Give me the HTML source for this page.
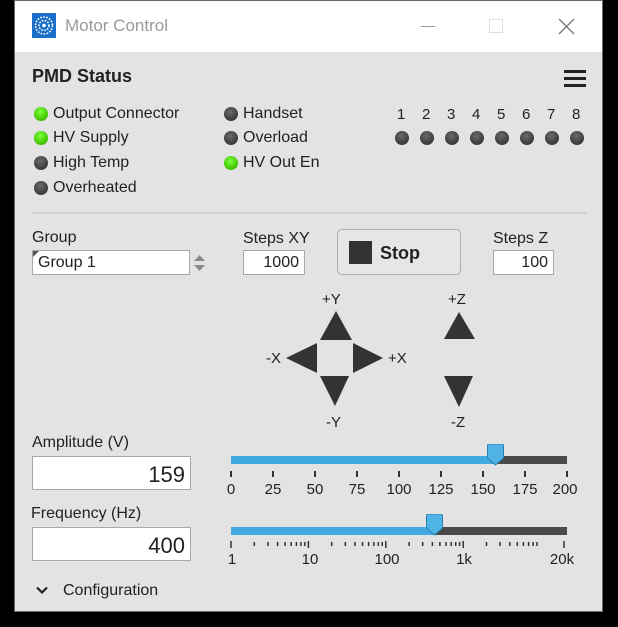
<!DOCTYPE html>
<html><head><meta charset="utf-8"><style>
*{margin:0;padding:0;box-sizing:border-box}
body{width:618px;height:627px;background:#000;position:relative;overflow:hidden;font-family:"Liberation Sans","DejaVu Sans",sans-serif;color:#222}
#win{position:absolute;left:14px;top:0;width:589px;height:612px;background:#e3e3e3;border:1px solid #6b6b6b}
#tb{position:absolute;left:0;top:0;width:100%;height:51px;background:#fff}
.a{position:absolute;white-space:nowrap}
.t{font-size:16px;line-height:18px}
.led{position:absolute;width:14px;height:14px;border-radius:50%;background:radial-gradient(circle at 45% 35%,#6a6a6a,#3a3a3a 70%)}
.g{background:radial-gradient(circle at 45% 35%,#7dff3a,#3cc000 70%)}
.inp{position:absolute;background:#fff;border:1px solid #a8a8a8;text-align:right;padding-right:5px}
.tick{position:absolute;width:2px;background:#333}
.tl{position:absolute;font-size:15px;transform:translateX(-50%)}
</style></head><body>
<div id="win">
<div id="tb">
 <svg class="a" style="left:17px;top:12px" width="24" height="25" viewBox="0 0 24 25"><rect width="24" height="25" fill="#1b6fc8"/><g fill="none" stroke="#fff" stroke-width="1.6" stroke-dasharray="1.6 1.4"><circle cx="12" cy="12.5" r="8.5"/><circle cx="12" cy="12.5" r="5"/></g><circle cx="12" cy="12.5" r="1.8" fill="#fff"/></svg>
 <div class="a" style="left:50px;top:15px;font-size:17px;color:#9a9a9a">Motor Control</div>
 <div class="a" style="left:406px;top:25px;width:14px;height:1px;background:#999"></div>
 <div class="a" style="left:474px;top:18px;width:14px;height:14px;border:1px solid #ddd"></div>
 <svg class="a" style="left:543px;top:17px" width="17" height="17"><path d="M1 1L16 16M16 1L1 16" stroke="#777" stroke-width="1.3"/></svg>
</div>
<div class="a" style="left:17px;top:65px;font-size:18px;font-weight:bold;color:#222">PMD Status</div>
<div class="a" style="left:549px;top:69px;width:22px;height:3px;background:#222;box-shadow:0 7px 0 #222,0 14px 0 #222"></div>

<div class="led g" style="left:19px;top:106px"></div><div class="a t" style="left:38px;top:104px">Output Connector</div>
<div class="led g" style="left:19px;top:130px"></div><div class="a t" style="left:38px;top:128px">HV Supply</div>
<div class="led" style="left:19px;top:155px"></div><div class="a t" style="left:38px;top:153px">High Temp</div>
<div class="led" style="left:19px;top:180px"></div><div class="a t" style="left:38px;top:178px">Overheated</div>
<div class="led" style="left:209px;top:106px"></div><div class="a t" style="left:228px;top:104px">Handset</div>
<div class="led" style="left:209px;top:130px"></div><div class="a t" style="left:228px;top:128px">Overload</div>
<div class="led g" style="left:209px;top:155px"></div><div class="a t" style="left:228px;top:153px">HV Out En</div>

<div class="a t" style="left:382px;top:105px;width:200px;font-size:15px">
<span class="a" style="left:0">1</span><span class="a" style="left:25px">2</span><span class="a" style="left:50px">3</span><span class="a" style="left:75px">4</span><span class="a" style="left:100px">5</span><span class="a" style="left:125px">6</span><span class="a" style="left:150px">7</span><span class="a" style="left:175px">8</span></div>
<div class="led" style="left:380px;top:130px"></div><div class="led" style="left:405px;top:130px"></div><div class="led" style="left:430px;top:130px"></div><div class="led" style="left:455px;top:130px"></div><div class="led" style="left:480px;top:130px"></div><div class="led" style="left:505px;top:130px"></div><div class="led" style="left:530px;top:130px"></div><div class="led" style="left:555px;top:130px"></div>

<div class="a" style="left:17px;top:211px;width:555px;height:2px;background:#cfcfcf"></div>

<div class="a t" style="left:17px;top:228px">Group</div>
<div class="inp" style="left:17px;top:249px;width:158px;height:25px;text-align:left;padding:3px 5px;font-size:16px">Group 1</div>
<div class="a" style="left:18px;top:250px;width:0;height:0;border-top:6px solid #555;border-right:6px solid transparent"></div>
<svg class="a" style="left:178px;top:252px" width="13" height="20"><path d="M1 8L6.5 2L12 8Z M1 12L6.5 18L12 12Z" fill="#8a8a8a"/></svg>

<div class="a t" style="left:228px;top:229px">Steps XY</div>
<div class="inp t" style="left:228px;top:249px;width:62px;height:25px;padding-top:3px">1000</div>
<div class="a" style="left:322px;top:228px;width:124px;height:46px;border:1px solid #adadad;border-radius:5px;background:#e6e6e6"></div>
<div class="a" style="left:334px;top:240px;width:23px;height:23px;background:#333"></div>
<div class="a" style="left:365px;top:242px;font-size:18px;font-weight:bold">Stop</div>
<div class="a t" style="left:478px;top:229px">Steps Z</div>
<div class="inp t" style="left:478px;top:249px;width:61px;height:25px;padding-top:3px">100</div>

<svg class="a" style="left:0;top:0" width="589" height="612">
<g fill="#333">
<path d="M321 310L337 339L305 339Z"/>
<path d="M271 357L302 342L302 372Z"/>
<path d="M368 357L338 342L338 372Z"/>
<path d="M305 375L334 375L320 405Z"/>
<path d="M444 311L460 338L429 338Z"/>
<path d="M429 375L458 375L444 406Z"/>
</g>
<g font-size="15" fill="#222" font-family="Liberation Sans,sans-serif">
<text x="307" y="303">+Y</text><text x="251" y="362">-X</text><text x="373" y="362">+X</text><text x="311" y="426">-Y</text>
<text x="433" y="303">+Z</text><text x="436" y="426">-Z</text>
</g>
</svg>

<div class="a t" style="left:17px;top:433px">Amplitude (V)</div>
<div class="inp" style="left:17px;top:455px;width:159px;height:34px;font-size:22px;padding-top:5px">159</div>
<div class="a" style="left:216px;top:455px;width:336px;height:8px;background:#4a4a4a"></div>
<div class="a" style="left:216px;top:455px;width:264px;height:8px;background:#3fa9e0"></div>
<svg class="a" style="left:472px;top:443px" width="17" height="22"><path d="M2 0H15Q16.5 0 16.5 2V14L8.5 21L0.5 14V2Q0.5 0 2 0Z" fill="#4fb3e6" stroke="#2a7fb0"/></svg>
<div id="amp"></div>

<div class="a t" style="left:16px;top:504px">Frequency (Hz)</div>
<div class="inp" style="left:17px;top:526px;width:159px;height:34px;font-size:22px;padding-top:5px">400</div>
<div class="a" style="left:216px;top:526px;width:336px;height:8px;background:#4a4a4a"></div>
<div class="a" style="left:216px;top:526px;width:203px;height:8px;background:#3fa9e0"></div>
<svg class="a" style="left:411px;top:513px" width="17" height="22"><path d="M2 0H15Q16.5 0 16.5 2V14L8.5 21L0.5 14V2Q0.5 0 2 0Z" fill="#4fb3e6" stroke="#2a7fb0"/></svg>

<div style="position:absolute;left:0;top:0">
<div class="tick" style="left:215px;top:470px;height:6px"></div><div class="tick" style="left:257px;top:470px;height:6px"></div><div class="tick" style="left:299px;top:470px;height:6px"></div><div class="tick" style="left:341px;top:470px;height:6px"></div><div class="tick" style="left:383px;top:470px;height:6px"></div><div class="tick" style="left:425px;top:470px;height:6px"></div><div class="tick" style="left:467px;top:470px;height:6px"></div><div class="tick" style="left:509px;top:470px;height:6px"></div><div class="tick" style="left:551px;top:470px;height:6px"></div>
<div class="tl" style="left:216px;top:480px">0</div><div class="tl" style="left:258px;top:480px">25</div><div class="tl" style="left:300px;top:480px">50</div><div class="tl" style="left:342px;top:480px">75</div><div class="tl" style="left:384px;top:480px">100</div><div class="tl" style="left:426px;top:480px">125</div><div class="tl" style="left:468px;top:480px">150</div><div class="tl" style="left:510px;top:480px">175</div><div class="tl" style="left:550px;top:480px">200</div>
</div>
<svg class="a" style="left:0;top:0" width="589" height="612"><g stroke="#333" stroke-width="1.5">
<path d="M216 540V547M293.4 540V547M370.8 540V547M448.2 540V547M549 540V547"/>
<path d="M239.3 541V545M252.9 541V545M262.6 541V545M270.1 541V545M276.2 541V545M281.4 541V545M285.9 541V545M289.8 541V545
M316.7 541V545M330.3 541V545M340 541V545M347.5 541V545M353.6 541V545M358.8 541V545M363.3 541V545M367.2 541V545
M394.1 541V545M407.7 541V545M417.4 541V545M424.9 541V545M431 541V545M436.2 541V545M440.7 541V545M444.6 541V545
M471.5 541V545M485.1 541V545M494.8 541V545M502.3 541V545M508.4 541V545M513.6 541V545M518.1 541V545M522 541V545"/>
</g></svg>
<div class="tl" style="left:217px;top:550px">1</div><div class="tl" style="left:295px;top:550px">10</div><div class="tl" style="left:372px;top:550px">100</div><div class="tl" style="left:449px;top:550px">1k</div><div class="tl" style="left:547px;top:550px">20k</div>

<svg class="a" style="left:21px;top:585px" width="12" height="9"><path d="M1 1.5L6 6.5L11 1.5" fill="none" stroke="#222" stroke-width="2.2"/></svg>
<div class="a t" style="left:48px;top:581px">Configuration</div>
</div>
</body></html>
